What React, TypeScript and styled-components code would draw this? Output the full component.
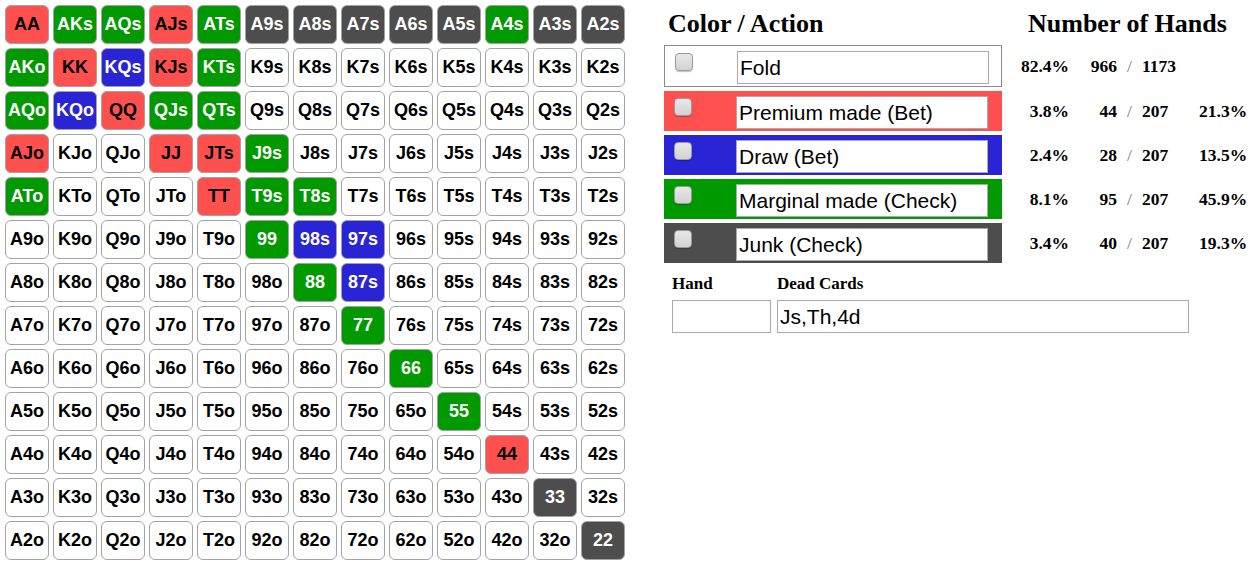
import * as React from 'react';
import styled, { createGlobalStyle } from 'styled-components';

const RANKS = ['A', 'K', 'Q', 'J', 'T', '9', '8', '7', '6', '5', '4', '3', '2'];

type Action = 'premium' | 'draw' | 'marginal' | 'junk' | 'none';

const COLORS: Record<Action, { bg: string; fg: string }> = {
    premium: { bg: '#ff5050', fg: '#000' },
    draw: { bg: '#2a25d4', fg: '#fff' },
    marginal: { bg: '#009900', fg: '#fff' },
    junk: { bg: '#4d4d4d', fg: '#fff' },
    none: { bg: '#fff', fg: '#000' }
};

// hands that are assigned to an action, the rest fold
const assigned: Record<string, Action> = {
    AA: 'premium', AJs: 'premium', KK: 'premium', KJs: 'premium', QQ: 'premium',
    AJo: 'premium', JJ: 'premium', JTs: 'premium', TT: 'premium', '44': 'premium',
    KQs: 'draw', KQo: 'draw', '98s': 'draw', '97s': 'draw', '87s': 'draw',
    AKs: 'marginal', AQs: 'marginal', ATs: 'marginal', A4s: 'marginal', AKo: 'marginal',
    KTs: 'marginal', AQo: 'marginal', QJs: 'marginal', QTs: 'marginal', J9s: 'marginal',
    ATo: 'marginal', T9s: 'marginal', T8s: 'marginal', '99': 'marginal', '88': 'marginal',
    '77': 'marginal', '66': 'marginal', '55': 'marginal',
    A9s: 'junk', A8s: 'junk', A7s: 'junk', A6s: 'junk', A5s: 'junk', A3s: 'junk',
    A2s: 'junk', '33': 'junk', '22': 'junk'
};

const legend: { action: Action | 'fold'; label: string; pct: string; count: string; total: string; share?: string }[] = [
    { action: 'fold', label: 'Fold', pct: '82.4%', count: '966', total: '1173' },
    { action: 'premium', label: 'Premium made (Bet)', pct: '3.8%', count: '44', total: '207', share: '21.3%' },
    { action: 'draw', label: 'Draw (Bet)', pct: '2.4%', count: '28', total: '207', share: '13.5%' },
    { action: 'marginal', label: 'Marginal made (Check)', pct: '8.1%', count: '95', total: '207', share: '45.9%' },
    { action: 'junk', label: 'Junk (Check)', pct: '3.4%', count: '40', total: '207', share: '19.3%' }
];

const GlobalStyle = createGlobalStyle`
    body {
        margin: 0;
        background: #fff;
        font-family: "Liberation Serif", "Times New Roman", serif;
    }
`;

const Page = styled.div`
    display: flex;
    align-items: flex-start;
    padding: 5px;
`;

const HandGrid = styled.div`
    display: grid;
    grid-template-columns: repeat(13, 44px);
    grid-auto-rows: 39px;
    column-gap: 4px;
    row-gap: 4px;
`;

const Cell = styled.div<{ $action: Action }>`
    box-sizing: border-box;
    display: flex;
    align-items: center;
    justify-content: center;
    border: 1px solid #a3a3a3;
    border-radius: 6px;
    background: ${p => COLORS[p.$action].bg};
    color: ${p => COLORS[p.$action].fg};
    font: bold 18px "Liberation Sans", Arial, sans-serif;
    padding-bottom: 1px;
`;

const Panel = styled.div`
    margin-left: 39px;
    padding-top: 4px;
`;

const Headers = styled.div`
    display: flex;
    padding-left: 4px;
    height: 30px;
`;

const Heading = styled.h2<{ $width?: number }>`
    margin: 0;
    font: bold 26px "Liberation Serif", "Times New Roman", serif;
    width: ${p => (p.$width ? `${p.$width}px` : 'auto')};
`;

const LegendList = styled.div`
    display: flex;
    flex-direction: column;
    gap: 4px;
    margin-top: 6px;
`;

const LegendRow = styled.div`
    display: flex;
    align-items: center;
`;

const ColorBox = styled.div<{ $bg: string; $outlined: boolean }>`
    box-sizing: border-box;
    width: 338px;
    height: ${p => (p.$outlined ? 42 : 40)}px;
    display: flex;
    align-items: flex-start;
    padding: 5px 0 0 10px;
    background: ${p => p.$bg};
    border: ${p => (p.$outlined ? '1px solid #8a8a8a' : 'none')};
`;

const Check = styled.input.attrs({ type: 'checkbox' })`
    appearance: none;
    box-sizing: border-box;
    width: 18px;
    height: 18px;
    margin: 2px 44px 0 0;
    border: 1px solid #9a9a9a;
    border-radius: 4px;
    background: linear-gradient(#e8e8e8, #d2d2d2);
    box-shadow: 0 1px 1px rgba(0, 0, 0, 0.25);
`;

const LabelInput = styled.input`
    box-sizing: border-box;
    width: 252px;
    height: 33px;
    margin: 0;
    padding: 0 2px;
    border: 1px solid #a9a9a9;
    background: #fff;
    color: #000;
    font: 21px "Liberation Sans", Arial, sans-serif;
    outline: none;
`;

const Stat = styled.span<{ $width: number; $align: 'left' | 'right' | 'center'; $light?: boolean }>`
    display: inline-block;
    width: ${p => p.$width}px;
    text-align: ${p => p.$align};
    font: ${p => (p.$light ? 'normal' : 'bold')} 17.5px "Liberation Serif", "Times New Roman", serif;
    color: ${p => (p.$light ? '#777' : '#000')};
`;

const HandForm = styled.div`
    display: grid;
    grid-template-columns: 99px 412px;
    column-gap: 6px;
    row-gap: 6px;
    padding-left: 8px;
    margin-top: 11px;
`;

const FieldLabel = styled.label`
    font: bold 17px "Liberation Serif", "Times New Roman", serif;
`;

const TextField = styled.input`
    box-sizing: border-box;
    height: 33px;
    margin: 0;
    padding: 0 2px;
    border: 1px solid #aaa;
    font: 21px "Liberation Sans", Arial, sans-serif;
    color: #000;
    outline: none;
`;

function handName(row: number, col: number) {
    if (row === col) return RANKS[row] + RANKS[col];
    if (col > row) return RANKS[row] + RANKS[col] + 's';
    return RANKS[col] + RANKS[row] + 'o';
}

export default function App() {
    const cells: string[] = [];
    for (let r = 0; r < 13; r++) {
        for (let c = 0; c < 13; c++) cells.push(handName(r, c));
    }

    return (
        <Page>
            <GlobalStyle />
            <HandGrid>
                {cells.map(h => (
                    <Cell key={h} $action={assigned[h] || 'none'}>{h}</Cell>
                ))}
            </HandGrid>
            <Panel>
                <Headers>
                    <Heading $width={360}>Color / Action</Heading>
                    <Heading>Number of Hands</Heading>
                </Headers>
                <LegendList>
                    {legend.map(item => (
                        <LegendRow key={item.label}>
                            <ColorBox
                                $bg={item.action === 'fold' ? '#fff' : COLORS[item.action].bg}
                                $outlined={item.action === 'fold'}
                            >
                                <Check />
                                <LabelInput defaultValue={item.label} />
                            </ColorBox>
                            <Stat $width={67} $align="right">{item.pct}</Stat>
                            <Stat $width={48} $align="right">{item.count}</Stat>
                            <Stat $width={25} $align="center" $light>/</Stat>
                            <Stat $width={57} $align="left">{item.total}</Stat>
                            <Stat $width={47} $align="right">{item.share}</Stat>
                        </LegendRow>
                    ))}
                </LegendList>
                <HandForm>
                    <FieldLabel>Hand</FieldLabel>
                    <FieldLabel>Dead Cards</FieldLabel>
                    <TextField />
                    <TextField defaultValue="Js,Th,4d" />
                </HandForm>
            </Panel>
        </Page>
    );
}
